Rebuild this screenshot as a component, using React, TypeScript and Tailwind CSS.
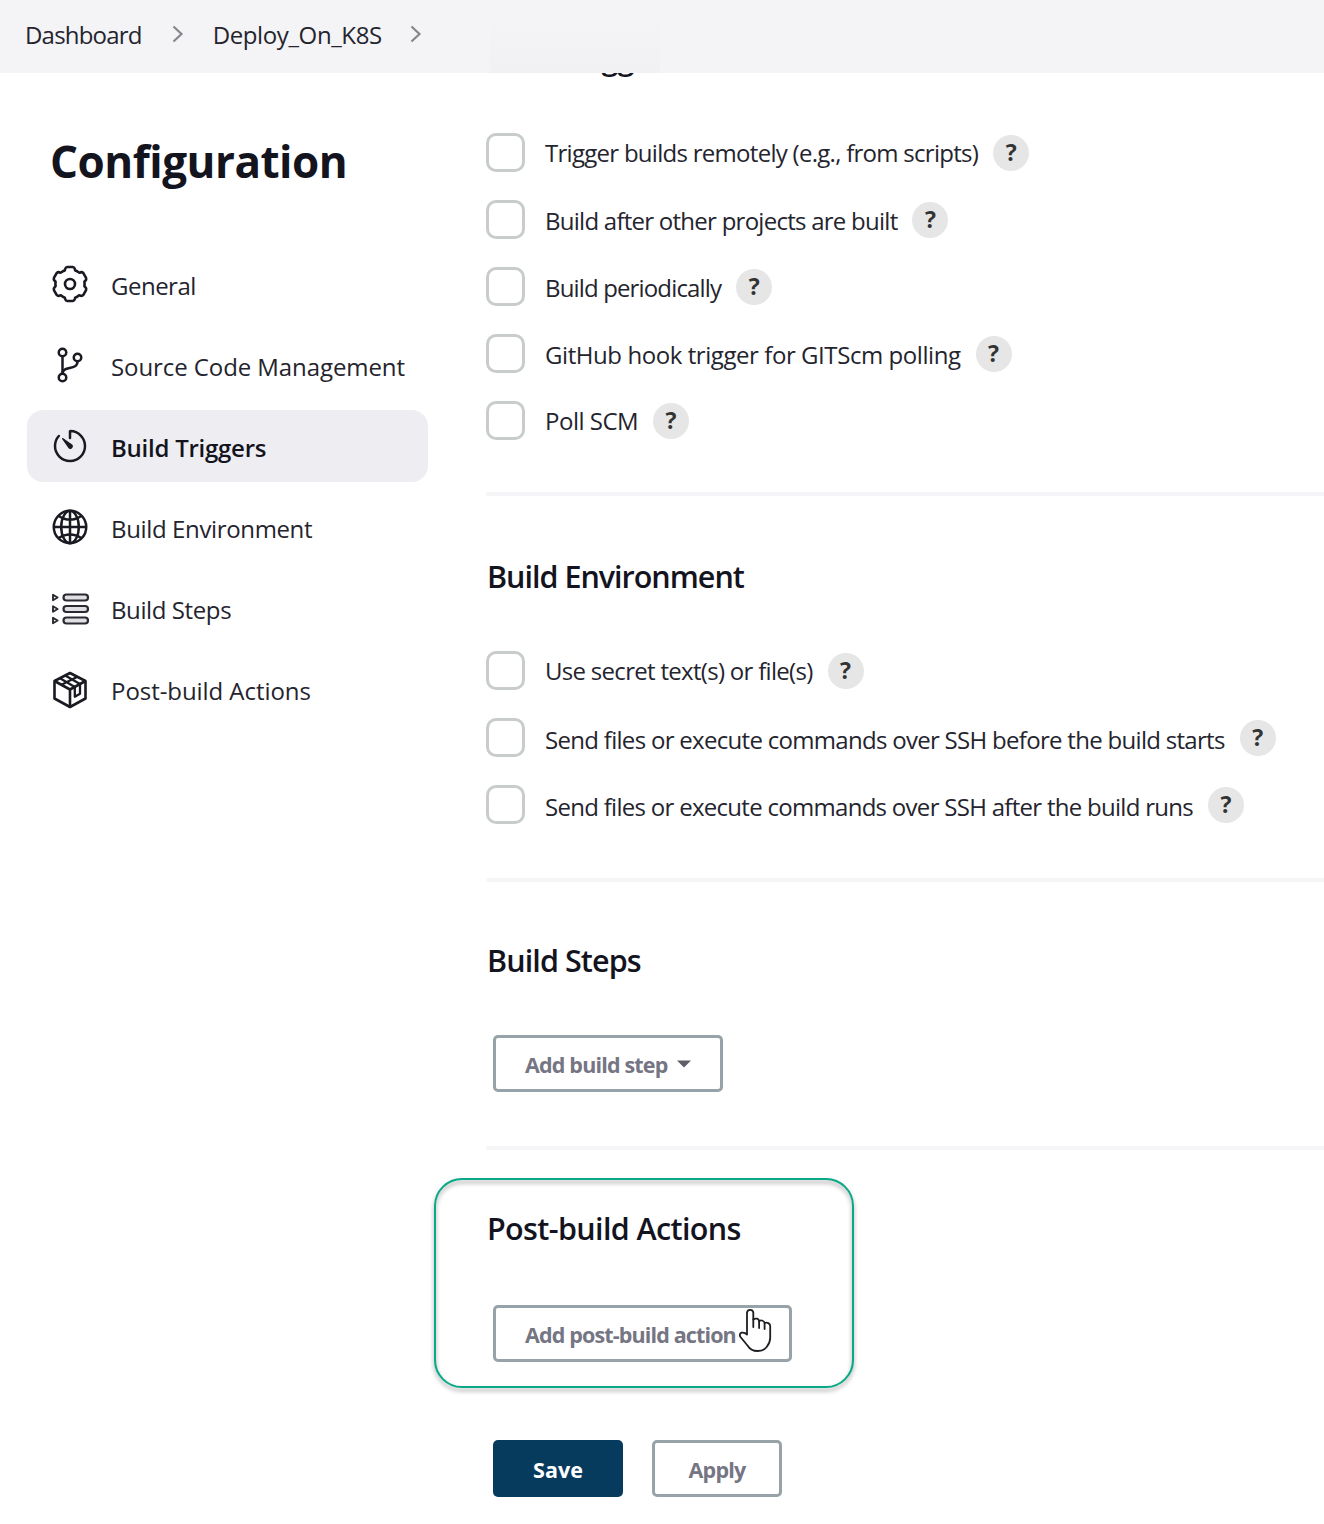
import type { ReactNode } from "react";
import { IoGitBranchOutline, IoTimerOutline, IoGlobeOutline } from "react-icons/io5";

const INK = "#1a1a22";

function Chevron() {
  return (
    <svg className="mb-[5px]" width="12" height="18" viewBox="0 0 12 18" fill="none" stroke="#85858b" strokeWidth="2.2">
      <path d="M1.5 1.5 9.5 9l-8 7.500" />
    </svg>
  );
}

// Outline of a six-toothed gear centred in a 40px box, with softened corners.
const gearPath =
  [0, 60, 120, 180, 240, 300]
    .map((a) => {
      const p = (r: number, d: number) => {
        const t = ((a + d - 90) * Math.PI) / 180;
        return `${(20 + r * Math.cos(t)).toFixed(2)} ${(20 + r * Math.sin(t)).toFixed(2)}`;
      };
      return `${a === 0 ? "M" : "L"}${p(14.6, -27)}Q${p(14.2, -20)} ${p(15.8, -18)}Q${p(17.2, -15)} ${p(17.2, -9)}L${p(17.2, 9)}Q${p(17.2, 15)} ${p(15.8, 18)}Q${p(14.2, 20)} ${p(14.6, 27)}`;
    })
    .join("") + "Z";

function GearIcon() {
  return (
    <svg width="40" height="40" viewBox="0 0 40 40" fill="none" stroke={INK} strokeWidth="2.6" strokeLinejoin="round">
      <path d={gearPath} />
      <circle cx="20" cy="20" r="5" />
    </svg>
  );
}

function StepsIcon() {
  return (
    <svg className="mt-[2px]" width="40" height="40" viewBox="0 0 40 40" fill="none" stroke="#2a2a33" strokeWidth="2.2">
      {[8.5, 20, 31.5].map((y) => (
        <g key={y}>
          <path d={`M3 ${y - 2.8}v5.600l4.600-2.800z`} strokeLinejoin="round" strokeWidth="1.900" />
          <rect x="13.5" y={y - 3} width="24.5" height="6" rx="3" fill="#e0e0e2" />
        </g>
      ))}
    </svg>
  );
}

function PackageIcon() {
  return (
    <svg className="mt-[2px]" width="40" height="40" viewBox="0 0 40 40" fill="none" stroke={INK} strokeWidth="2.6" strokeLinejoin="round">
      <path d="M20 3 35.500 11v17.500L20 37 4.500 28.500V11z" />
      <path d="M4.500 11 20 19.500 35.500 11M20 19.500V37" />
      <path d="M10 8.200 24.800 17v9.800l5.200-3V14L15.200 5.600M11.500 14.800 27.500 6.800" strokeWidth="2.3" />
    </svg>
  );
}

function HandCursor() {
  return (
    <svg className="absolute left-[252px] top-[100px]" width="35" height="46" viewBox="0 0 35 46" fill="none" stroke="#1d1d22" strokeWidth="1.8" strokeLinejoin="round" strokeLinecap="round">
      <path
        fill="#fff"
        d="M9 26.500V4.500a3.200 3.200 0 0 1 6.300 0V11.500c2.500-1.800 5.400-.8 5.800 1.500 2.400-1.200 5.200-.2 5.500 2 2.700-1 5.600.2 5.600 3.200V30c0 4-1.700 6.800-3.700 9.300-1.800 2.200-4.600 3.700-9 3.700-4.700 0-7.800-2-9.800-5.300L2.500 29c-1.300-2-.6-3.700 1.200-4.300 1.900-.5 3.600.1 5.300 1.800z"
      />
      <path d="M15.300 11.500v7.500M21.100 13v7M26.600 15v6" />
    </svg>
  );
}

const nav = [
  { icon: <GearIcon />, label: "General", spacing: "tracking-[-0.5px]" },
  { icon: <IoGitBranchOutline size={40} />, label: "Source Code Management", spacing: "tracking-[-0.08px]" },
  { icon: <IoTimerOutline size={40} />, label: "Build Triggers", spacing: "tracking-[-0.25px]", active: true },
  { icon: <IoGlobeOutline size={40} />, label: "Build Environment", spacing: "tracking-[-0.36px]" },
  { icon: <StepsIcon />, label: "Build Steps", spacing: "tracking-[-0.4px]" },
  { icon: <PackageIcon />, label: "Post-build Actions", spacing: "tracking-[-0.06px]" },
];

const triggers = [
  { label: "Trigger builds remotely (e.g., from scripts)", style: "tracking-[-0.72px]" },
  { label: "Build after other projects are built", style: "pt-[3px] tracking-[-0.74px]" },
  { label: "Build periodically", style: "pt-[3px] tracking-[-0.85px]" },
  { label: "GitHub hook trigger for GITScm polling", style: "pt-[3px] tracking-[-0.43px]" },
  { label: "Poll SCM", style: "tracking-[-0.5px]" },
];

const environment = [
  { label: "Use secret text(s) or file(s)", style: "pt-px tracking-[-0.7px]" },
  { label: "Send files or execute commands over SSH before the build starts", style: "pt-1 tracking-[-0.7px]" },
  { label: "Send files or execute commands over SSH after the build runs", style: "pt-1 tracking-[-0.71px]" },
];

function Option({ label, style }: { label: string; style: string }) {
  return (
    <label className="flex h-[67px] items-center">
      <span className="size-[39px] shrink-0 rounded-[10px] border-[3px] border-[#c8cccd] bg-white" />
      <span className={`ml-5 whitespace-nowrap leading-[34px] ${style}`}>{label}</span>
      <span className="ml-[15px] flex size-9 shrink-0 items-center justify-center rounded-full bg-[#e6e6e6] text-[23px] font-bold text-[#333]">?</span>
    </label>
  );
}

function Heading({ className, children }: { className: string; children: ReactNode }) {
  return <h2 className={`pl-px text-[30.5px] font-semibold leading-10 text-[#14141f] ${className}`}>{children}</h2>;
}

const outlineButton =
  "flex h-[57px] items-center rounded-[5px] border-[3px] border-[#98a3a9] bg-white pt-[3px] text-[21.5px] font-bold text-[#757583]";

export default function App() {
  return (
    <div className="h-[1524px] w-[1324px] overflow-hidden bg-white font-['Open_Sans',sans-serif] text-[24px] text-[#24242e]">
      <header className="relative z-10 flex h-[73px] items-center bg-[#f4f4f6] pl-[25px]">
        <span className="pb-[3px] tracking-[-0.8px]">Dashboard</span>
        <span className="ml-[30px]"><Chevron /></span>
        <span className="ml-[29px] pb-[3px] tracking-[-0.38px]">Deploy_On_K8S</span>
        <span className="ml-[28px]"><Chevron /></span>
        <span className="ml-[68px] h-[61px] w-[170px] self-end bg-linear-to-b from-[#f4f4f6] to-[#f1f1f3]" />
      </header>
      <div className="flex h-[1451px]">
        <aside className="w-[486px] shrink-0 pl-[27px] pt-[61px]">
          <h1 className="pl-[23px] text-[44px] font-bold leading-[54px] tracking-[-0.5px] text-[#14141f]">Configuration</h1>
          <nav className="mt-[60px] flex w-[401px] flex-col gap-[9px]">
            {nav.map((n) => (
              <a
                key={n.label}
                className={
                  n.active
                    ? "flex h-[72px] items-center rounded-2xl bg-[#eeeef2] pl-[23px] font-semibold text-[#14141f]"
                    : "flex h-[72px] items-center pl-[23px]"
                }
              >
                <span className="flex w-10 justify-center text-[#1a1a22]">{n.icon}</span>
                <span className={`ml-[21px] whitespace-nowrap pt-[3px] ${n.spacing}`}>{n.label}</span>
              </a>
            ))}
          </nav>
        </aside>
        <main className="flex-1">
          <Heading className="-mt-[35px] tracking-[-0.88px]">Build Triggers</Heading>
          <div className="mt-[41px]">
            {triggers.map((o) => <Option key={o.label} {...o} />)}
          </div>
          <hr className="mt-[38px] border-t-4 border-[#f6f6f8]" />
          <Heading className="mt-[60px] tracking-[-1px]">Build Environment</Heading>
          <div className="mt-[41px]">
            {environment.map((o) => <Option key={o.label} {...o} />)}
          </div>
          <hr className="mt-10 border-t-4 border-[#f6f6f8]" />
          <Heading className="mt-[58px] tracking-[-0.9px]">Build Steps</Heading>
          <button className={`ml-[7px] mt-[55px] w-[230px] pl-[29px] tracking-[-0.82px] ${outlineButton}`}>
            Add build step
            <svg className="mb-0.5 ml-[9px]" width="14" height="8" viewBox="0 0 14 8"><path d="M0 .5h14L7 7.500z" fill="#5e5e69" /></svg>
          </button>
          <hr className="mt-[54px] border-t-4 border-[#f6f6f8]" />
          <section className="relative mt-[58px]">
            <Heading className="tracking-[-0.63px]">Post-build Actions</Heading>
            <button className={`ml-[7px] mt-[57px] w-[299px] pl-[29px] tracking-[-0.86px] ${outlineButton}`}>Add post-build action</button>
            <div className="pointer-events-none absolute -left-[52px] -top-[30px] h-[210px] w-[420px] rounded-[28px] border-2 border-[#07a987] drop-shadow-[0_3px_2px_rgba(0,0,0,0.4)]" />
            <HandCursor />
          </section>
          <div className="ml-[7px] mt-[78px] flex gap-[29px]">
            <button className="flex h-[57px] w-[130px] items-center justify-center rounded-[5px] bg-[#073b5e] pt-[3px] text-[21.5px] font-bold text-white">Save</button>
            <button className={`w-[130px] justify-center tracking-[-0.8px] ${outlineButton}`}>Apply</button>
          </div>
        </main>
      </div>
    </div>
  );
}
